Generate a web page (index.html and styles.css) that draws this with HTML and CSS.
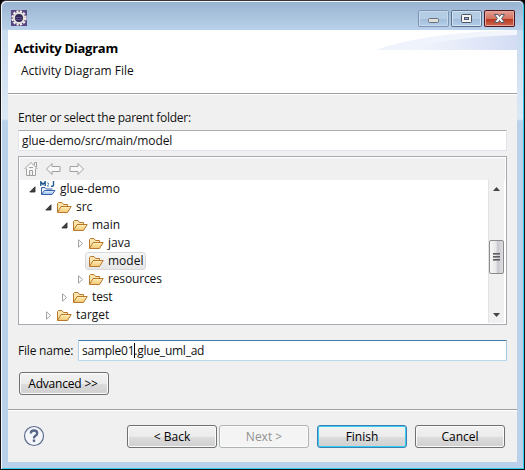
FILE: index.html
```html
<!DOCTYPE html>
<html lang="en">
<head>
<meta charset="utf-8">
<title>Activity Diagram</title>
<link rel="stylesheet" href="styles.css">
</head>
<body>
<svg width="0" height="0" class="defs">
  <defs>
    <linearGradient id="fold" x1="0" y1="0" x2="0" y2="1"><stop offset="0" stop-color="#fff0b8"/><stop offset="1" stop-color="#f3c674"/></linearGradient>
    <linearGradient id="blue" x1="0" y1="0" x2="0" y2="1"><stop offset="0" stop-color="#eaf4ff"/><stop offset="1" stop-color="#8fb9ee"/></linearGradient>
    <linearGradient id="haze"><stop offset="0" stop-color="#eef2fb"/><stop offset="1" stop-color="#f3f6fc"/></linearGradient>
    <linearGradient id="swoosh"><stop offset="0" stop-color="#f4f6fc"/><stop offset=".5" stop-color="#e6ebf9"/><stop offset="1" stop-color="#d3dcf4"/></linearGradient>
    <symbol id="folder" viewBox="0 0 16 16"><path d="M1.5 13V4.500L2.500 3.500H6L7.500 5.500H11.500V8" fill="#fbe6b0" stroke="#b9782c"/><path d="M1.500 13.500L5 7.500H15.200L11.500 13.500Z" fill="url(#fold)" stroke="#b9782c"/></symbol>
    <symbol id="open" viewBox="0 0 7 7"><path d="M6 .8V6H.8Z" fill="#444" stroke="#222" stroke-width=".8"/></symbol>
    <symbol id="closed" viewBox="0 0 7 9"><path d="M1.500 .8V8.200L5.500 4.500Z" fill="#fff" stroke="#a2a2a2"/></symbol>
  </defs>
</svg>
<div class="window">
  <header class="titlebar">
    <svg class="gear" width="16" height="16" viewBox="0 0 16 16"><rect width="16" height="16" fill="#5b4684"/><circle cx="8" cy="8" r="6.500" fill="none" stroke="#f3f0e8" stroke-width="2.400" stroke-dasharray="2.200 1.203"/><circle cx="8" cy="8" r="5" fill="#2d2655" stroke="#e4e0dc" stroke-width="2"/><path d="M5 7.500h6M5 9.500h6" stroke="#65508f"/></svg>
    <div class="controls">
      <span class="control"><svg width="31" height="17"><rect x="10.500" y="8.500" width="10" height="4" rx="1" fill="#e1e1dc" stroke="#69717d"/></svg></span>
      <span class="control max"><svg width="31" height="17"><rect x="10.500" y="4.500" width="10" height="8" rx="1" fill="#f4f4f4" stroke="#4d5464"/><rect x="13.500" y="7.500" width="4" height="2" fill="#91b5da" stroke="#4d5464"/></svg></span>
      <span class="control close"><svg width="31" height="17"><path d="M10.500 4.500H14L15.500 6.500L17 4.500H20.500L17.700 8.500L20.500 12.500H17L15.500 10.500L14 12.500H10.500L13.300 8.500Z" fill="#f5f5f5" stroke="#535b6b"/></svg></span>
    </div>
  </header>
  <main class="client">
    <section class="banner">
      <h1>Activity Diagram</h1>
      <p>Activity Diagram File</p>
      <svg class="swoosh" width="141" height="20"><path d="M0 20Q45 3 141 0V20Z" fill="url(#haze)"/><path d="M30 20Q72 7 141 5V20Z" fill="url(#swoosh)"/></svg>
    </section>
    <section class="form">
      <label class="prompt">Enter or select the parent folder:</label>
      <div class="field path">glue-demo/src/main/model</div>
      <div class="browser">
        <div class="tools">
          <svg width="60" height="16" fill="#f8f8f8" stroke="#a0a0a0"><path d="M2.500 7.500V14.500H11.500V7.500M.5 8L7 1.500L13.500 8M10.500 4V1.500H12.500V6M5.500 14V9.500H8.500V14M5 6.500H9"/><path d="M22.500 8L28 2.500V5.500H36V10.500H28V13.500ZM59.500 8L54 2.500V5.500H46V10.500H54V13.500Z"/></svg>
        </div>
        <div class="treewrap">
          <ul class="tree">
            <li class="l0"><svg class="arrow"><use href="#open"/></svg><svg class="icon" viewBox="0 0 16 16"><path d="M1.500 13.500V6.500H5L6.500 8H12.500" fill="#e8f0fb" stroke="#3860a8"/><path d="M1.500 13.500L4.500 9.500H15L12 13.500Z" fill="url(#blue)" stroke="#3860a8"/><path d="M.8 5V.8L3 3.500L5.200.8V5M13.500 0V4Q13.500 5.500 11 5.200" fill="none" stroke="#245a91" stroke-width="1.400"/><path d="M7 2h1.500v1.500L7 5h2" fill="none" stroke="#668eb5"/></svg><span>glue-demo</span></li>
            <li class="l1"><svg class="arrow"><use href="#open"/></svg><svg class="icon"><use href="#folder"/></svg><span>src</span></li>
            <li class="l2"><svg class="arrow"><use href="#open"/></svg><svg class="icon"><use href="#folder"/></svg><span>main</span></li>
            <li class="l3"><svg class="arrow"><use href="#closed"/></svg><svg class="icon"><use href="#folder"/></svg><span>java</span></li>
            <li class="l3 leaf"><div class="selected"><svg class="icon"><use href="#folder"/></svg><span>model</span></div></li>
            <li class="l3"><svg class="arrow"><use href="#closed"/></svg><svg class="icon"><use href="#folder"/></svg><span class="long">resources</span></li>
            <li class="l2"><svg class="arrow"><use href="#closed"/></svg><svg class="icon"><use href="#folder"/></svg><span class="long">test</span></li>
            <li class="l1"><svg class="arrow"><use href="#closed"/></svg><svg class="icon"><use href="#folder"/></svg><span>target</span></li>
          </ul>
          <div class="scrollbar">
            <svg width="7" height="4"><path d="M0 4L3.500 0L7 4Z" fill="#444"/></svg>
            <div class="thumb"><i></i><i></i><i></i></div>
            <svg width="7" height="4"><path d="M0 0L3.500 4L7 0Z" fill="#444"/></svg>
          </div>
        </div>
      </div>
      <div class="filerow"><label>File name:</label><div class="field name"><span>sample01</span><i class="caret"></i><span>.glue_uml_ad</span></div></div>
      <button class="btn advanced">Advanced &gt;&gt;</button>
    </section>
    <footer class="footer">
      <svg class="help" width="22" height="22"><circle cx="11" cy="11" r="9.500" fill="#f4f6fa" stroke="#5e6e8e" stroke-width="1.200"/><path d="M7.800 8.500Q7.800 5.500 11 5.500T14.200 8.300Q14.200 9.800 12.500 10.800T11 13.300" fill="none" stroke="#576587" stroke-width="2.300"/><rect x="9.800" y="14.500" width="2.400" height="2.400" fill="#576587"/></svg>
      <button class="btn back">&lt; Back</button>
      <button class="btn next" disabled>Next &gt;</button>
      <button class="btn finish">Finish</button>
      <button class="btn cancel">Cancel</button>
    </footer>
  </main>
</div>
</body>
</html>
```
FILE: styles.css
```css
* { box-sizing: border-box; }
body { margin: 0; background: #000; font: 12px/18px "Open Sans", "Noto Sans", sans-serif; color: #111; overflow: hidden; }
.defs { position: absolute; }
svg { display: block; flex: none; }
.window { width: 525px; height: 470px; border: 1px solid #151515; border-top-color: #39343c; border-radius: 6px 6px 0 0; background: linear-gradient(#c3d7ed 0, #dce8f5 118px, #b9d1ea 120px); box-shadow: inset 1px 1px #f4f8fc, inset -1px -1px #35cbed; padding: 1px 7px 7px; }
.titlebar { height: 28px; margin: 0 -6px; padding: 8px 8px 0; display: flex; justify-content: space-between; background: linear-gradient(#99b4d1, #b9d1ea); border-radius: 5px 5px 0 0; }
.gear { margin-left: 1px; }
.controls { display: flex; gap: 2px; }
.control { width: 31px; height: 17px; border-radius: 2px; box-shadow: inset 0 0 0 1px #7c95b5, inset 0 0 0 2px #c8d9ec; background: linear-gradient(#b5cce5 50%, #a1bddb 50%, #b6d0eb); }
.control.max { box-shadow: inset 0 0 0 1px #5b6f8d, inset 0 0 0 2px #d5e4f3; }
.control.close { box-shadow: inset 0 0 0 1px #501420, inset 0 0 0 2px #e6a89a; background: linear-gradient(#e3a399, #d4735f 50%, #b83219 50%, #cf7059); }
.client { width: 509px; height: 432px; background: #f0f0f0; }
.banner { position: relative; height: 65px; background: #fff; border-bottom: 1px solid #fff; box-shadow: inset 0 -1px #a0a0a0; padding: 8px 6px; }
.banner h1 { margin: 0; font-size: 13px; line-height: 20px; font-weight: 700; color: #000; letter-spacing: -.28px; }
.banner p { margin: 4px 0 0 7px; line-height: 18px; }
.swoosh { position: absolute; right: 0; top: 0; }
.form { padding: 14px 10px 0; height: 314px; }
.prompt { display: block; height: 21px; line-height: 18px; letter-spacing: -.27px; }
.field { display: flex; align-items: center; background: #fff; border: 1px solid #e2e3ea; border-top-color: #abadb3; border-radius: 1px; height: 21px; padding: 0 3px; white-space: pre; }
.path { letter-spacing: -.12px; }
.browser { margin-top: 5px; height: 169px; border: 1px solid #a7a9b1; background: #fff; padding: 1px; }
.tools { height: 22px; background: #f0f0f0; padding: 3px 4px; }
.treewrap { display: flex; height: 143px; padding-right: 1px; }
.tree { flex: 1; margin: 0; padding: 0; list-style: none; }
.tree li { display: flex; align-items: center; height: 18px; }
.long { letter-spacing: -.15px; }
.l0 { padding-left: 9px; }
.l1 { padding-left: 25px; }
.l2 { padding-left: 41px; }
.l3 { padding-left: 57px; }
.arrow { width: 7px; height: 9px; margin-right: 4px; }
.icon { width: 16px; height: 16px; margin-right: 4px; }
.tree .leaf { padding-left: 65px; }
.selected { display: flex; align-items: center; height: 18px; width: 61px; padding-left: 2px; border: 1px solid #d9d9d9; border-radius: 3px; background: linear-gradient(#f8f8f8, #e6e6e6); }
.scrollbar { width: 16px; background: #f0f0f0; border-left: 1px solid #e3e3e3; display: flex; flex-direction: column; align-items: center; justify-content: space-between; padding: 7px 0 6px; }
.thumb { width: 15px; height: 34px; border: 1px solid #8c8c8c; border-radius: 2px; background: linear-gradient(90deg, #f6f6f6, #e8e8eb 45%, #c8c8d0 60%, #dedee2); display: flex; flex-direction: column; align-items: center; justify-content: center; gap: 1px; margin-top: 10px; }
.thumb i { width: 7px; height: 2px; background: linear-gradient(#444, #aaa); }
.filerow { display: flex; align-items: center; margin-top: 15px; height: 21px; }
.filerow label { width: 60px; white-space: nowrap; letter-spacing: -.2px; }
.name { width: 429px; border-color: #3d7bad #a4c9e3 #b7d9ed #b5cfe7; letter-spacing: -.25px; }
.caret { width: 1px; height: 15px; background: #000; margin-right: -1px; }
.btn { width: 90px; height: 23px; padding: 0; border: 1px solid #707070; border-radius: 3px; box-shadow: inset 0 0 0 1px #fbfbfb; background: linear-gradient(#f2f2f2, #ebebeb 50%, #dddddd 50%, #cfcfcf); font: inherit; line-height: 19px; color: #000; flex: none; }
.advanced { display: block; margin: 11px 0 0 1px; padding-right: 2px; letter-spacing: -.2px; }
.footer { border-top: 1px solid #a0a0a0; box-shadow: inset 0 1px #fff; height: 53px; padding: 15px 0 0 15px; display: flex; }
.back { margin-left: 82px; }
.next { margin-left: 2px; color: #919191; border-color: #adb2b5; background: #f4f4f4; }
.finish { margin-left: 8px; border-color: #3c7fb1; box-shadow: inset 0 0 0 1px #38cdf5; }
.cancel { margin-left: 8px; }
```
